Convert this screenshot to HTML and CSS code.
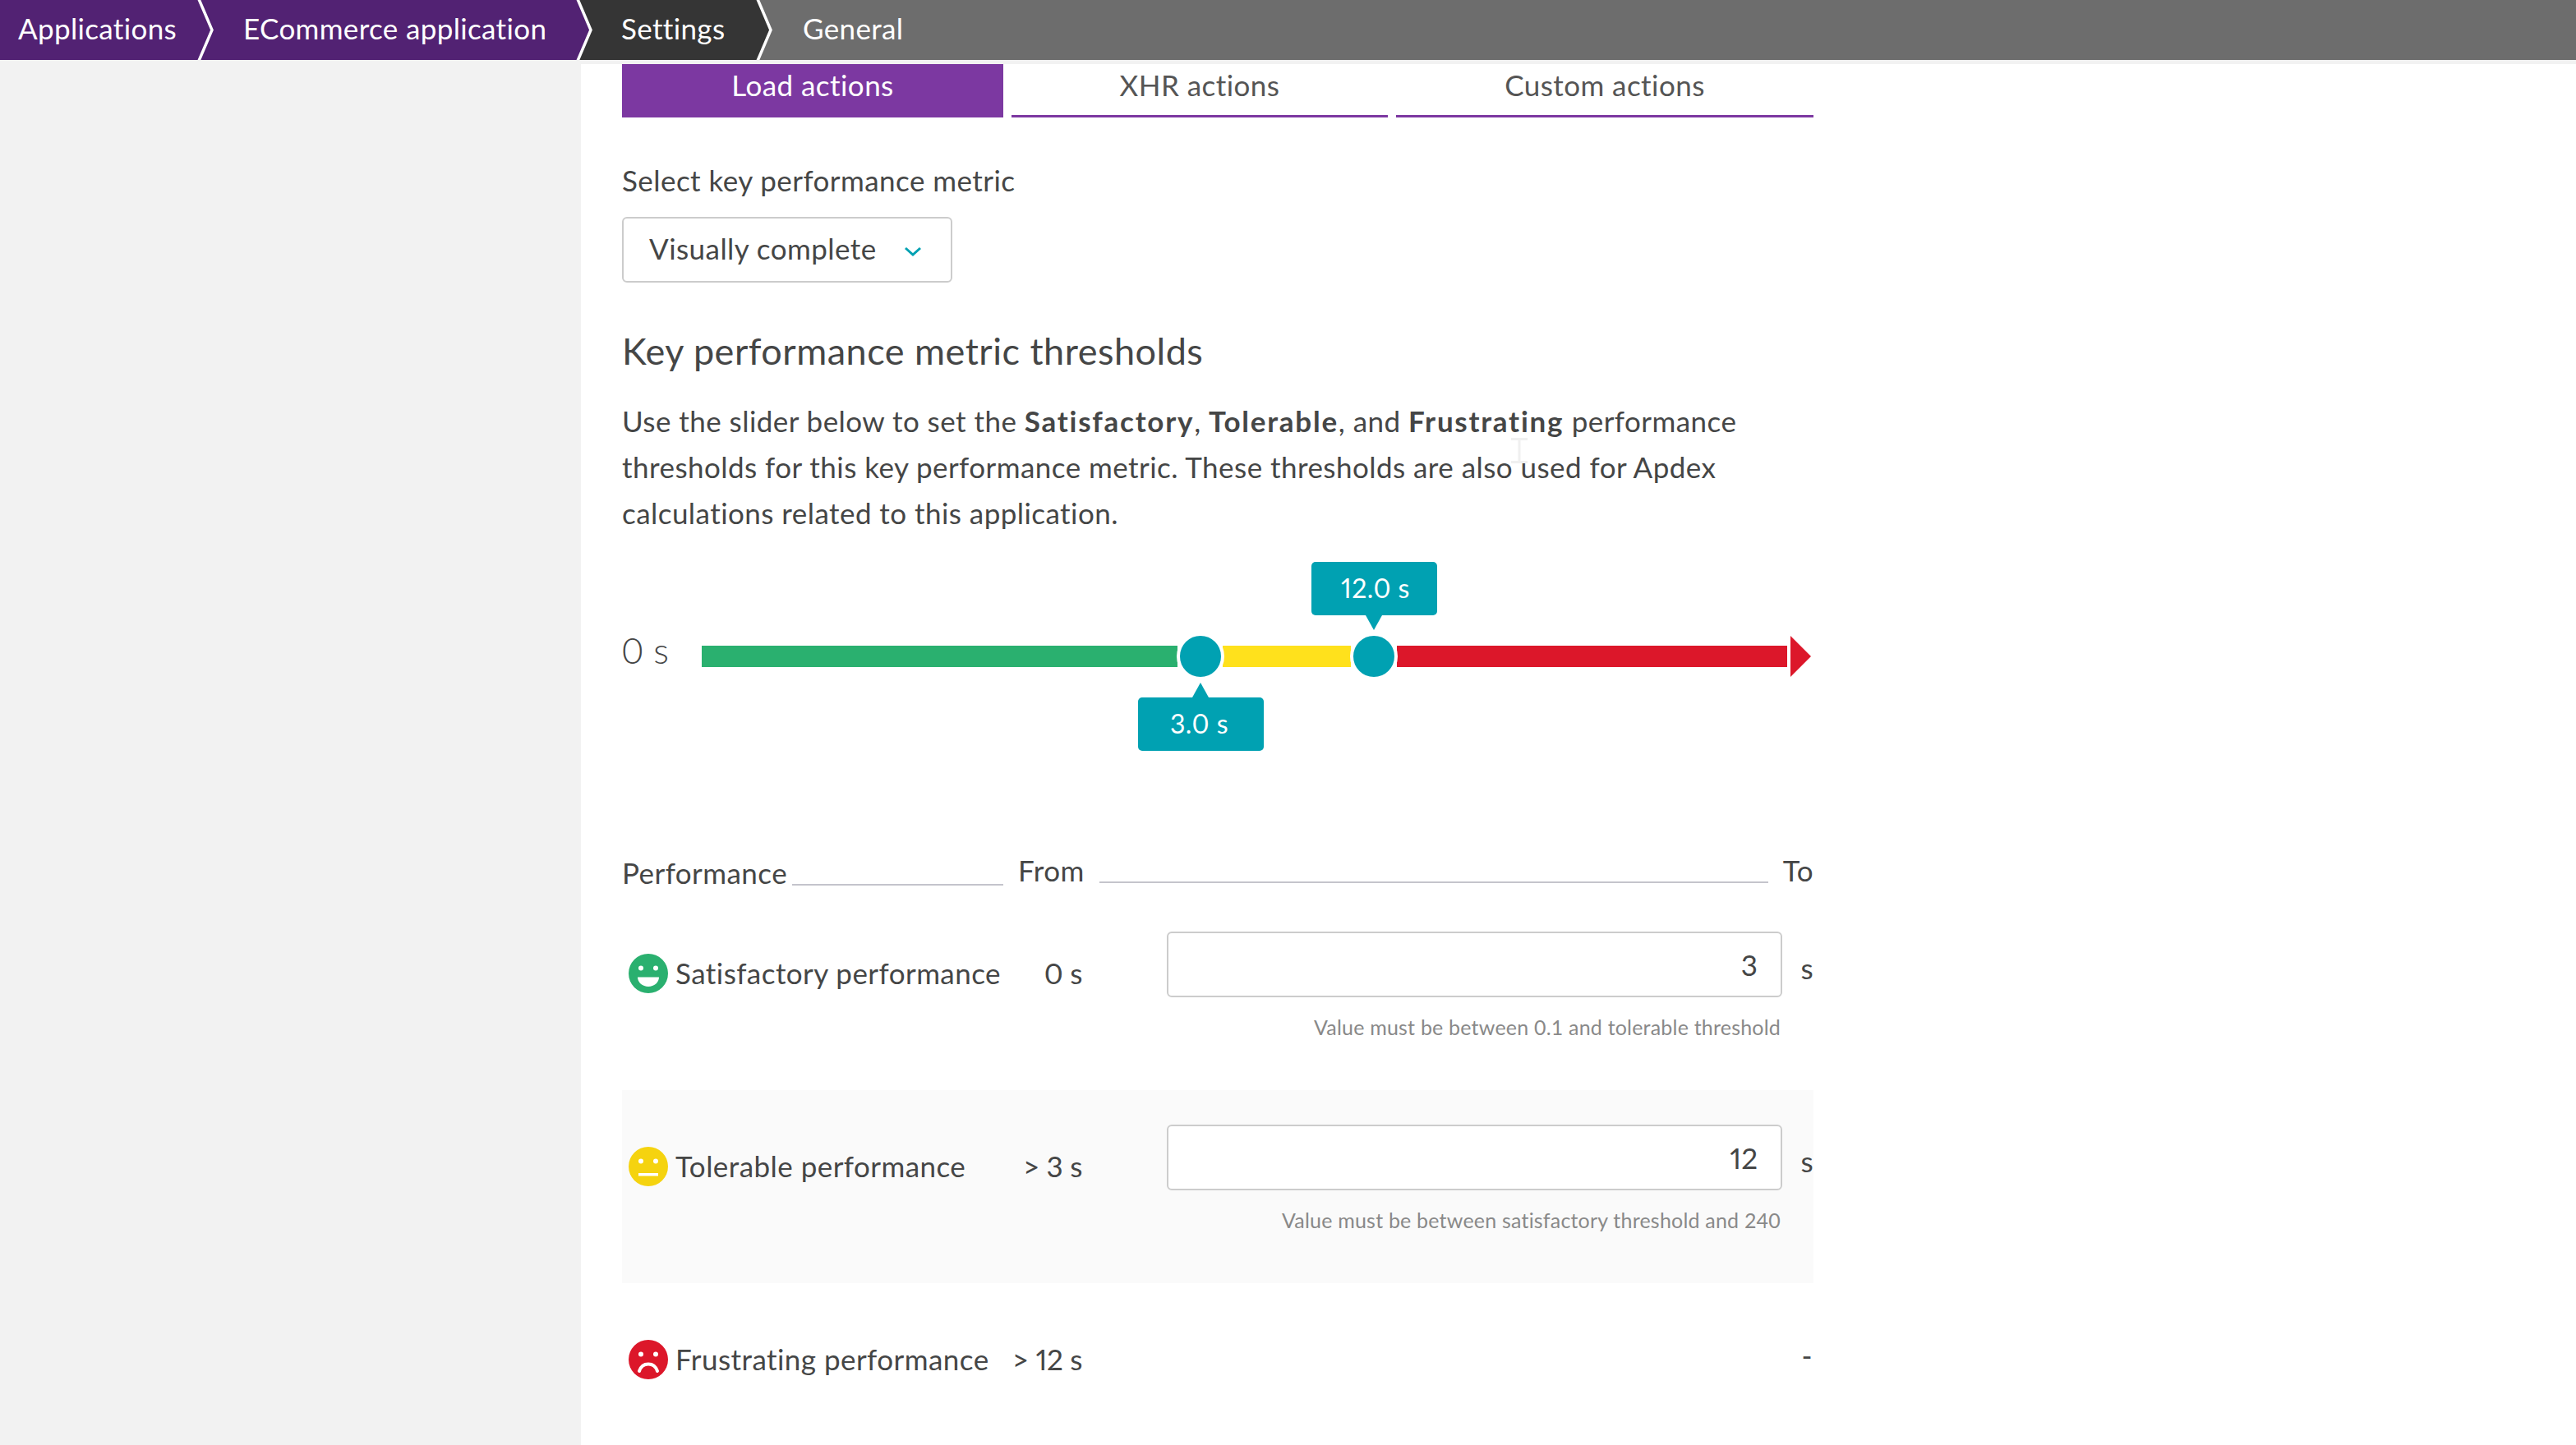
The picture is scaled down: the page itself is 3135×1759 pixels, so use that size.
FILE: index.html
```html
<!DOCTYPE html>
<html lang="en">
<head>
  <meta charset="UTF-8">
  <meta name="viewport" content="width=device-width, initial-scale=1.0">
  <title>Settings - General</title>
  <link rel="stylesheet" href="styles.css">
</head>
<body>
  <!-- Breadcrumb -->
  <header class="crumbs">
    <a class="crumb crumb-first">Applications</a>
    <svg class="crumb-arrow arrow-purple" viewBox="0 0 24 73"><path class="tip tip-purple" d="M0 0H3L19 36.5L3 73H0Z"/><path class="edge" d="M2 -1L18 36.5L2 74"/></svg>
    <a class="crumb crumb-app">ECommerce application</a>
    <svg class="crumb-arrow arrow-dark" viewBox="0 0 24 73"><path class="tip tip-purple" d="M0 0H3L19 36.5L3 73H0Z"/><path class="edge" d="M2 -1L18 36.5L2 74"/></svg>
    <a class="crumb crumb-settings">Settings</a>
    <svg class="crumb-arrow arrow-gray" viewBox="0 0 24 73"><path class="tip tip-dark" d="M0 0H3L19 36.5L3 73H0Z"/><path class="edge" d="M2 -1L18 36.5L2 74"/></svg>
    <a class="crumb crumb-general">General</a>
  </header>

  <div class="layout">
    <aside class="sidebar"></aside>

    <main class="content">
      <nav class="tabs">
        <a class="tab tab-load active">Load actions</a>
        <a class="tab tab-xhr">XHR actions</a>
        <a class="tab tab-custom">Custom actions</a>
      </nav>

      <label class="field-label">Select key performance metric</label>
      <div class="select">
        <span>Visually complete</span>
        <svg class="chevron" viewBox="0 0 22 12"><path d="M2 2L11 10L20 2"/></svg>
      </div>

      <h2>Key performance metric thresholds</h2>
      <p class="intro">Use the slider below to set the <b>Satisfactory</b>, <b>Tolerable</b>, and <b>Frustrating</b> performance<br>thresholds for this key performance metric. These thresholds are also used for Apdex<br>calculations related to this application.
        <!-- mouse pointer caught in the shot -->
        <svg class="cursor" viewBox="0 0 20 31"><path d="M0 1.500H20M10 1.500V29.500M0 29.500H20"/></svg>
      </p>

      <!-- Threshold slider -->
      <div class="slider">
        <span class="slider-start">0 s</span>
        <div class="track">
          <div class="seg seg-green"></div>
          <div class="seg seg-yellow"></div>
          <div class="seg seg-red"></div>
          <div class="track-arrow"></div>
        </div>
        <div class="handle handle-low"></div>
        <div class="handle handle-high"></div>
        <div class="tip-box tip-high">12.0 s</div>
        <div class="tip-box tip-low">3.0 s</div>
      </div>

      <div class="perf-head">
        <div class="head-name"><span>Performance</span><i class="rule rule-low"></i></div>
        <span class="head-from">From</span>
        <i class="rule"></i>
        <span class="head-to">To</span>
      </div>

      <div class="perf-row">
        <div class="perf-name">
          <svg class="face" viewBox="0 0 48 48"><circle class="face-green" cx="24" cy="24" r="24"/><circle class="mark" cx="15" cy="17.5" r="3"/><circle class="mark" cx="33" cy="17.5" r="3"/><path class="mark" d="M11 28.500H37C37 35 31 40 24 40S11 35 11 28.500Z"/></svg>
          <span>Satisfactory performance</span>
          <span class="perf-from">0 s</span>
        </div>
        <div class="perf-input">
          <input type="text" value="3">
          <div class="hint">Value must be between 0.1 and tolerable threshold</div>
        </div>
        <span class="unit">s</span>
      </div>

      <div class="perf-row row-shaded">
        <div class="perf-name">
          <svg class="face" viewBox="0 0 48 48"><circle class="face-yellow" cx="24" cy="24" r="24"/><circle class="mark" cx="15" cy="17.5" r="3"/><circle class="mark" cx="33" cy="17.5" r="3"/><rect class="mark" x="12" y="32" width="24" height="3.500"/></svg>
          <span>Tolerable performance</span>
          <span class="perf-from">&gt; 3 s</span>
        </div>
        <div class="perf-input">
          <input type="text" value="12">
          <div class="hint">Value must be between satisfactory threshold and 240</div>
        </div>
        <span class="unit">s</span>
      </div>

      <div class="perf-row">
        <div class="perf-name">
          <svg class="face" viewBox="0 0 48 48"><circle class="face-red" cx="24" cy="24" r="24"/><circle class="mark" cx="15" cy="17.5" r="3"/><circle class="mark" cx="33" cy="17.5" r="3"/><path class="frown" d="M13 38C15 32 19 29.500 24 29.500S33 32 35 38"/></svg>
          <span>Frustrating performance</span>
          <span class="perf-from">&gt; 12 s</span>
        </div>
        <div class="perf-input"></div>
        <span class="unit unit-dash">-</span>
      </div>
    </main>
  </div>
</body>
</html>
```

FILE: styles.css
```css
html, body { height: 100%; overflow: hidden; }
body { font-family: Lato, "Noto Sans", sans-serif; font-size: 35px; letter-spacing: .45px; color: #454646; background: #fff; margin: 0; padding: 0; }

/* breadcrumb */
.crumbs { display: flex; height: 73px; background: #6d6d6d; border-bottom: 5px solid #f2f2f2; color: #fff; line-height: 68px; }
.crumb { display: block; box-sizing: border-box; white-space: nowrap; letter-spacing: .35px; }
.crumb-first { background: #522273; padding-left: 22px; width: 240px; }
.crumb-app { background: #522273; padding-left: 32px; width: 437px; }
.crumb-settings { background: #353535; padding-left: 31px; width: 195px; }
.crumb-general { padding-left: 33px; }
.crumb-arrow { display: block; width: 24px; height: 73px; flex: none; }
.arrow-purple { background: #522273; }
.arrow-dark { background: #353535; }
.arrow-gray { background: #6d6d6d; }
.tip-purple { fill: #522273; }
.tip-dark { fill: #353535; }
.edge { fill: none; stroke: #fff; stroke-width: 3.500; }

.layout { display: flex; height: 1681px; }
.sidebar { width: 707px; flex: none; background: #f2f2f2; }
.content { width: 1450px; flex: none; margin-left: 50px; }

/* tabs */
.tabs { display: flex; gap: 10px; height: 65px; }
.tab { display: block; box-sizing: border-box; height: 65px; line-height: 51px; text-align: center; border-bottom: 3px solid #7c38a1; color: #555; }
.tab-load { width: 464px; }
.tab-xhr { width: 458px; }
.tab-custom { width: 508px; }
.tab.active { background: #7c38a1; color: #fff; }

.field-label { display: block; margin-top: 56px; line-height: 40px; }
.select { display: flex; align-items: center; justify-content: space-between; box-sizing: border-box; width: 402px; height: 80px; margin-top: 25px; padding: 0 35px 5px 31px; border: 2px solid #ccc; border-radius: 6px; }
.chevron { width: 22px; height: 12px; margin-top: 9px; fill: none; stroke: #00a1b2; stroke-width: 3; }

h2 { font-size: 45px; font-weight: 400; letter-spacing: .5px; line-height: 60px; margin: 53px 0 0; }
.intro { position: relative; line-height: 56px; margin: 27px 0 0; }
.intro b { font-weight: 700; letter-spacing: 1.750px; }
.cursor { position: absolute; left: 1082px; top: 49px; width: 20px; height: 31px; fill: none; stroke: #f0f0f0; stroke-width: 3; }

/* slider */
.slider { position: relative; height: 230px; margin-top: 32px; }
.slider-start { position: absolute; left: 0; top: 77px; font-size: 44px; font-weight: 300; line-height: 60px; }
.track { position: absolute; left: 97px; top: 90px; display: flex; align-items: center; height: 50px; }
.seg { height: 26px; }
.seg-green { width: 579px; background: #2ab06f; }
.seg-yellow { width: 156px; margin-left: 55px; background: #ffe11c; }
.seg-red { width: 475px; margin-left: 56px; background: #dc172a; }
.track-arrow { width: 25px; height: 50px; margin-left: 4px; background: #dc172a; clip-path: polygon(0 0, 100% 50%, 0 100%); }
.handle { position: absolute; top: 90px; width: 50px; height: 50px; box-sizing: content-box; margin: -4px 0 0 -4px; border: 4px solid #fff; border-radius: 50%; background: #00a1b2; }
.handle-low { left: 679px; }
.handle-high { left: 890px; }
.tip-box { position: absolute; box-sizing: border-box; width: 153px; height: 65px; line-height: 64px; text-align: center; font-size: 32px; font-variant-numeric: proportional-nums; color: #fff; background: #00a1b2; border-radius: 5px; }
.tip-box::after { content: ""; position: absolute; left: 66px; width: 20px; height: 18px; background: #00a1b2; }
.tip-high { left: 839px; top: 0; padding-left: 3px; }
.tip-high::after { top: 65px; clip-path: polygon(0 0, 100% 0, 50% 100%); }
.tip-low { left: 628px; top: 165px; padding-right: 4px; }
.tip-low::after { top: -18px; clip-path: polygon(50% 0, 100% 100%, 0 100%); }

/* performance table */
.perf-head { display: flex; align-items: flex-end; height: 70px; margin-top: 108px; padding-bottom: 10px; box-sizing: border-box; line-height: 40px; }
.head-name { display: flex; align-items: flex-end; width: 464px; flex: none; padding-top: 3px; }
.rule { display: block; flex: 1; height: 2px; margin: 0 0 7px 18px; background: #c4c4cc; }
.rule-low { margin: 0 0 4px 6px; }
.head-from { margin-left: 18px; margin-bottom: 3px; }
.head-to { margin-left: 18px; margin-bottom: 3px; }

.perf-row { display: grid; grid-template-columns: 663px 749px 38px; height: 235px; }
.row-shaded { background: #fafafa; }
.perf-name { display: flex; align-items: center; align-self: start; width: 560px; height: 49px; margin-top: 68px; padding-left: 8px; box-sizing: border-box; line-height: 61px; }
.face { width: 48px; height: 48px; flex: none; margin-right: 9px; }
.face-green { fill: #2ab06f; }
.face-yellow { fill: #f5d30f; }
.face-red { fill: #dc172a; }
.mark { fill: #fff; }
.frown { fill: none; stroke: #fff; stroke-width: 4; stroke-linecap: round; }
.perf-from { margin-left: auto; letter-spacing: -.3px; font-variant-numeric: proportional-nums; }
.perf-input { padding-top: 42px; }
.perf-input input { display: block; box-sizing: border-box; width: 749px; height: 80px; padding: 0 28px 1px 0; border: 2px solid #ccc; border-radius: 6px; background: #fff; font: inherit; font-variant-numeric: proportional-nums; color: #454646; text-align: right; outline: none; }
.hint { margin: 19px 2px 0 0; font-size: 25px; letter-spacing: .2px; line-height: 34px; text-align: right; color: #898989; }
.unit { margin-top: 56px; line-height: 60px; text-align: right; }
.unit-dash { margin-top: 67px; line-height: 40px; padding-right: 1px; }
```
